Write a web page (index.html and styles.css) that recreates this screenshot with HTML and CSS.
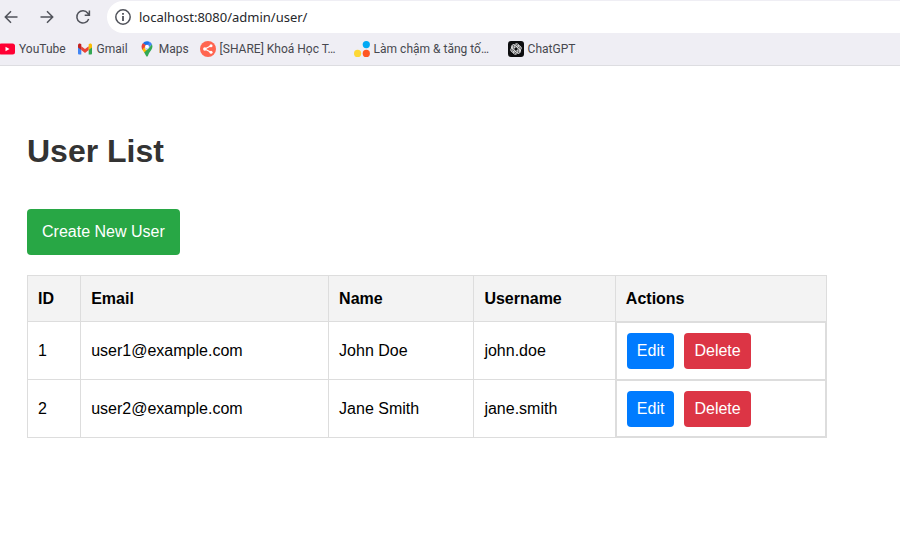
FILE: index.html
```html
<!DOCTYPE html>
<html lang="en">
<head>
<meta charset="utf-8">
<meta name="viewport" content="width=device-width, initial-scale=1">
<title>User List</title>
<link rel="stylesheet" href="styles.css">
</head>
<body>
<header class="browser">
  <div class="toolbar">
    <div class="nav">
      <button type="button" class="nav-button" aria-label="Back"><svg class="icon" viewBox="0 0 16 16"><path d="M14.500 8H2.500M8 2.300 2.300 8 8 13.700"/></svg></button>
      <button type="button" class="nav-button" aria-label="Forward"><svg class="icon" viewBox="0 0 16 16"><path d="M1.500 8h12M8 2.300 13.700 8 8 13.700"/></svg></button>
      <button type="button" class="nav-button" aria-label="Reload"><svg class="icon" viewBox="0 0 16 16"><path d="M13.700 10A6.100 6.100 0 1 1 12.800 4.200L14.200 6M14.400 1.500V6.200H9.700"/></svg></button>
    </div>
    <div class="address">
      <svg class="icon" viewBox="0 0 16 16"><circle cx="8" cy="8" r="7.200"/><path d="M8 7v5M8 4v1.700" stroke-width="1.800"/></svg>
      <input class="address-input" type="text" aria-label="Address" value="localhost:8080/admin/user/">
    </div>
  </div>
  <nav class="bookmarks" aria-label="Bookmarks">
    <a class="bookmark" href="#"><svg class="favicon" viewBox="0 0 16 16"><rect y="2.500" width="16" height="11" rx="2.500" fill="#ff0033"/><path d="M6.500 5.700v4.600L10.500 8z" fill="#fff"/></svg><span>YouTube</span></a>
    <a class="bookmark" href="#"><svg class="favicon" viewBox="0 0 16 16"><path d="M1 4v8.500q0 1 1 1h2.300V6z" fill="#4285f4"/><path d="M15 4v8.500q0 1-1 1h-2.300V6z" fill="#34a853"/><path d="M4.300 5.200 8 8l3.700-2.800v3.900L8 11.900 4.300 9.100z" fill="#ea4335"/><path d="M1 4.300C1 2.500 3 2 4.300 3.200v5.900L1 6.600z" fill="#c5221f"/><path d="M15 4.300c0-1.800-2-2.300-3.300-1.100v5.900L15 6.600z" fill="#fbbc04"/></svg><span>Gmail</span></a>
    <a class="bookmark" href="#"><svg class="favicon" viewBox="0 0 16 16"><path d="M8 .3a5.500 5.500 0 0 0-4.200 1.900L8 6l3-5A6 6 0 0 0 8 .3z" fill="#1a73e8"/><path d="M3.800 2.200C2 4.500 2.300 7 3.600 9.200L8 4.700z" fill="#ea4335"/><path d="M11 1 6 6.500l1.500 2L13 3.500A5.500 5.500 0 0 0 11 1z" fill="#4285f4"/><path d="m3.300 8.600 2.900-3.300a2.300 2.300 0 0 0 3.500 3L5.500 12z" fill="#fbbc04"/><path d="M13 3.200c1.200 3-.2 5.300-2 7.500C9.500 12.500 9 15.700 8 15.700S6.500 13.500 5.200 11.600L9.700 7.300z" fill="#34a853"/><circle cx="8" cy="5.800" r="2" fill="#fff"/></svg><span>Maps</span></a>
    <a class="bookmark bookmark-long" href="#"><svg class="favicon" viewBox="0 0 16 16"><circle cx="8" cy="8" r="8" fill="#ff6550"/><path d="M11 4.700 4.800 8l6.200 3.300" fill="none" stroke="#fff" stroke-width="1.200"/><circle cx="11" cy="4.700" r="1.500" fill="#fff"/><circle cx="4.800" cy="8" r="1.700" fill="#fff"/><circle cx="11" cy="11.300" r="1.500" fill="#fff"/></svg><span>[SHARE] Khoá Học T…</span></a>
    <a class="bookmark bookmark-long" href="#"><svg class="favicon" viewBox="0 0 16 16"><circle cx="12.300" cy="3.600" r="3.600" fill="#03a9f4"/><circle cx="3.600" cy="12.400" r="3.600" fill="#fdd835"/><circle cx="12.300" cy="12.400" r="3.600" fill="#ff5722"/></svg><span>Làm chậm &amp; tăng tố…</span></a>
    <a class="bookmark" href="#"><svg class="favicon" viewBox="0 0 16 16"><rect width="16" height="16" rx="3" fill="#0d0d0f"/><g fill="none" stroke="#fff" stroke-width=".8"><path id="petal" d="M6 8.900V5.300a2.600 2.600 0 0 1 4.900-1.200M6 5.300l3.100-1.800"/><use href="#petal" transform="rotate(60 8 8)"/><use href="#petal" transform="rotate(120 8 8)"/><use href="#petal" transform="rotate(180 8 8)"/><use href="#petal" transform="rotate(240 8 8)"/><use href="#petal" transform="rotate(300 8 8)"/></g></svg><span>ChatGPT</span></a>
  </nav>
</header>
<main class="page">
  <h1 class="title">User List</h1>
  <a class="button button-create" href="#">Create New User</a>
  <table class="users">
    <thead>
      <tr><th>ID</th><th>Email</th><th>Name</th><th>Username</th><th>Actions</th></tr>
    </thead>
    <tbody>
      <tr><td>1</td><td>user1@example.com</td><td>John Doe</td><td>john.doe</td><td class="actions-cell"><div class="actions"><a class="button button-edit" href="#">Edit</a><button type="button" class="button button-delete">Delete</button></div></td></tr>
      <tr><td>2</td><td>user2@example.com</td><td>Jane Smith</td><td>jane.smith</td><td class="actions-cell"><div class="actions"><a class="button button-edit" href="#">Edit</a><button type="button" class="button button-delete">Delete</button></div></td></tr>
    </tbody>
  </table>
</main>
</body>
</html>
```
FILE: styles.css
```css
* {
  box-sizing: border-box;
}

body {
  margin: 0;
  background: #fff;
  color: #000;
  font: 16px/26px "Liberation Sans", Arial, sans-serif;
}

/* Browser bar */
.browser {
  background: #efeef4;
  border-bottom: 1px solid #dddde1;
  font-family: Roboto, "Noto Sans", sans-serif;
  overflow: hidden;
}

.toolbar {
  display: flex;
  padding-top: 1px;
}

.nav {
  display: flex;
  align-items: center;
  gap: 20px;
  padding: 0 16px 0 3px;
}

.nav-button {
  display: flex;
  padding: 0;
  border: 0;
  background: none;
}

.icon {
  flex: none;
  width: 16px;
  height: 16px;
  fill: none;
  stroke: #50525a;
  stroke-width: 1.5;
}

.address {
  flex: 1;
  display: flex;
  align-items: center;
  gap: 8px;
  height: 32px;
  padding-left: 8px;
  background: #fff;
  border-radius: 16px 0 0 16px;
}

.address-input {
  flex: 1;
  min-width: 0;
  padding: 0;
  border: 0;
  outline: 0;
  background: none;
  color: #26272b;
  font: 13px/20px "Noto Sans", "Open Sans", sans-serif;
}

.bookmarks {
  display: flex;
  align-items: center;
  gap: 11px;
  height: 32px;
  margin-left: -1px;
}

.bookmark {
  flex: none;
  display: flex;
  align-items: center;
  gap: 4px;
  color: #47484f;
  font-size: 12px;
  line-height: 16px;
  text-decoration: none;
  white-space: nowrap;
}

.bookmark-long {
  width: 143px;
}

.favicon {
  flex: none;
  width: 16px;
  height: 16px;
}

/* Page */
.page {
  max-width: 854px;
  padding: 59px 27px;
}

.title {
  margin: 0 0 32px;
  color: #333;
  font-size: 32px;
  line-height: 52px;
}

.button {
  display: inline-block;
  padding: 5px 10px;
  border: 0;
  border-radius: 4px;
  color: #fff;
  font: inherit;
  text-decoration: none;
}

.button-create {
  padding: 10px 15px;
  background: #28a745;
}

.button-edit {
  background: #007bff;
}

.button-delete {
  background: #dc3545;
}

.users {
  width: 100%;
  margin-top: 20px;
  border-collapse: collapse;
}

.users th,
.users td {
  padding: 10px;
  border: 1px solid #ddd;
  text-align: left;
}

.users th {
  background: #f3f3f3;
  line-height: 25px;
}

.users .actions-cell {
  padding: 0;
}

.actions {
  display: flex;
  gap: 10px;
  padding: 10px;
  border: solid #ddd;
  border-width: 1px 1px 0;
}

tr:last-child .actions {
  padding-bottom: 9px;
  border-bottom-width: 1px;
}
```
